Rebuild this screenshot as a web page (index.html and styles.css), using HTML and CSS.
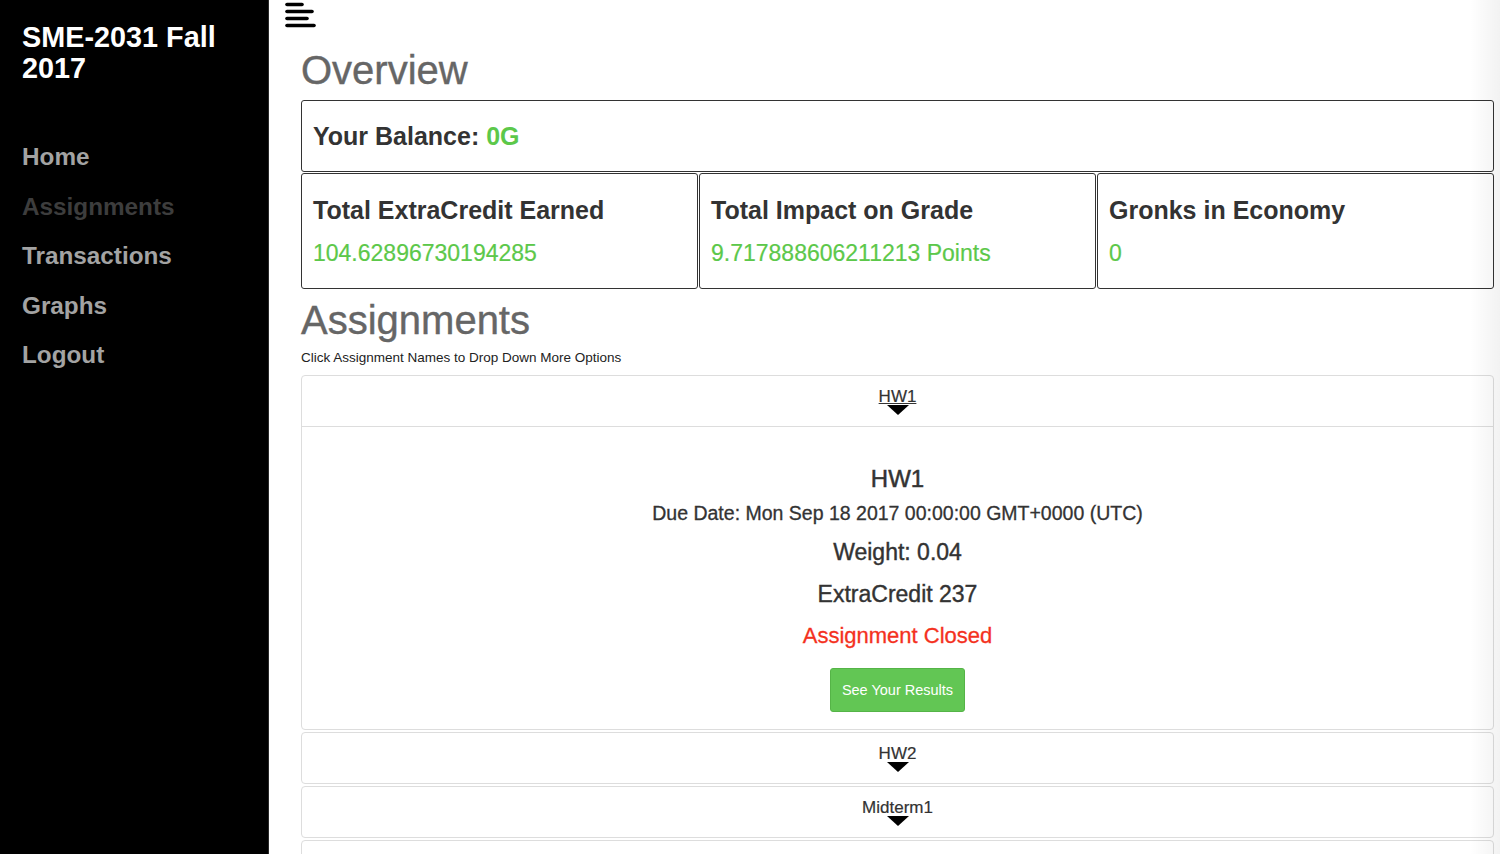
FILE: index.html
```html
<!DOCTYPE html>
<html>
<head>
    <title>SME-2031 Fall 2017 - Overview</title>
    <meta charset="UTF-8">
    <link rel="stylesheet" href="styles.css">
</head>
<body>
    <div class="wrapper">
        <nav class="sidebar">
            <h2 class="brand">SME-2031 Fall 2017</h2>
            <ul class="nav-links">
                <li><a href="#">Home</a></li>
                <li><a href="#" class="active">Assignments</a></li>
                <li><a href="#">Transactions</a></li>
                <li><a href="#">Graphs</a></li>
                <li><a href="#">Logout</a></li>
            </ul>
        </nav>

        <main class="content">
            <button class="menu-toggle" aria-label="Toggle menu">
                <svg width="31" height="27" viewBox="0 0 31 27">
                    <g stroke="#000" stroke-width="3.6" stroke-linecap="round">
                        <line x1="2" y1="2.5" x2="17" y2="2.5"/>
                        <line x1="2" y1="9.5" x2="27" y2="9.5"/>
                        <line x1="2" y1="16.5" x2="22" y2="16.5"/>
                        <line x1="2" y1="23.5" x2="29" y2="23.5"/>
                    </g>
                </svg>
            </button>

            <div class="page">
                <h1>Overview</h1>

                <div class="stat-box balance">
                    Your Balance: <span class="green">0G</span>
                </div>

                <div class="stat-row">
                    <div class="stat-box">
                        <div class="stat-title">Total ExtraCredit Earned</div>
                        <div class="stat-value green">104.62896730194285</div>
                    </div>
                    <div class="stat-box">
                        <div class="stat-title">Total Impact on Grade</div>
                        <div class="stat-value green">9.717888606211213 Points</div>
                    </div>
                    <div class="stat-box">
                        <div class="stat-title">Gronks in Economy</div>
                        <div class="stat-value green">0</div>
                    </div>
                </div>

                <h1>Assignments</h1>
                <p class="hint">Click Assignment Names to Drop Down More Options</p>

                <div class="panel-group">
                    <div class="panel open">
                        <div class="panel-heading">
                            <a href="#" class="panel-title underline">HW1</a>
                            <div class="arrow"></div>
                        </div>
                        <div class="panel-body">
                            <h3>HW1</h3>
                            <div class="due">Due Date: Mon Sep 18 2017 00:00:00 GMT+0000 (UTC)</div>
                            <div class="detail">Weight: 0.04</div>
                            <div class="detail">ExtraCredit 237</div>
                            <div class="detail closed">Assignment Closed</div>
                            <button class="results-btn">See Your Results</button>
                        </div>
                    </div>
                    <div class="panel">
                        <div class="panel-heading">
                            <a href="#" class="panel-title">HW2</a>
                            <div class="arrow"></div>
                        </div>
                    </div>
                    <div class="panel">
                        <div class="panel-heading">
                            <a href="#" class="panel-title">Midterm1</a>
                            <div class="arrow"></div>
                        </div>
                    </div>
                    <div class="panel">
                        <div class="panel-heading">
                            <a href="#" class="panel-title">HW3</a>
                            <div class="arrow"></div>
                        </div>
                    </div>
                </div>
            </div>
            <div class="edge-shade"></div>
        </main>
    </div>
</body>
</html>
```

FILE: styles.css
```css
html, body {
    height: 100%;
}

body {
    font-family: "Liberation Sans", Arial, Helvetica, sans-serif;
    margin: 0;
    background-color: #fff;
    color: #333;
    overflow: hidden;
}

.wrapper {
    display: flex;
    height: 854px;
}

/* sidebar */
.sidebar {
    width: 268px;
    flex-shrink: 0;
    background: #000;
    border-right: 1px solid #2a2a2a;
}

.brand {
    margin: 22px 22px 0 22px;
    font-size: 28.8px;
    line-height: 31px;
    font-weight: bold;
    color: #fff;
}

.nav-links {
    list-style: none;
    margin: 48px 0 0 0;
    padding: 0;
}

.nav-links a {
    display: block;
    padding: 10px 22px;
    line-height: 29.5px;
    font-size: 24.3px;
    font-weight: bold;
    color: #a3a3a3;
    text-decoration: none;
}

.nav-links a.active {
    color: #3d3d3d;
}

/* main area */
.content {
    flex: 1;
    position: relative;
    padding: 2px 6px 0 16px;
}

.menu-toggle {
    display: block;
    background: none;
    border: none;
    padding: 0;
    margin: 0;
    height: 27px;
    cursor: pointer;
}

.menu-toggle svg {
    display: block;
}

.page {
    padding-left: 16px;
}

h1 {
    font-size: 40px;
    line-height: 44px;
    font-weight: normal;
    color: #666;
    margin: 0;
    -webkit-text-stroke: 0.4px #666;
}

.page > h1:first-child {
    margin-top: 19px;
    margin-bottom: 8px;
}

.green {
    color: #5cc84a;
}

.stat-box {
    border: 1px solid #333;
    border-radius: 3px;
    padding: 21px 11px 21px 11px;
}

.balance {
    padding: 20px 11px;
    font-size: 25px;
    line-height: 30px;
    font-weight: bold;
}

.stat-row {
    display: grid;
    grid-template-columns: repeat(3, 1fr);
    gap: 1px;
    margin-top: 1px;
}

.stat-title {
    font-size: 25px;
    line-height: 30px;
    font-weight: bold;
}

.stat-value {
    font-size: 23px;
    line-height: 28px;
    margin-top: 14px;
    -webkit-text-stroke: 0.2px #5cc84a;
}

.stat-row + h1 {
    margin-top: 9px;
}

.hint {
    font-size: 13.5px;
    line-height: 18px;
    margin: 7px 0 8px 0;
    color: #222;
}

/* assignment panels */
.panel {
    border: 1px solid #ddd;
    border-radius: 4px;
    margin-bottom: 2px;
    background: #fff;
}

.panel-heading {
    padding: 11px 15px;
    text-align: center;
}

.panel.open .panel-heading {
    border-bottom: 1px solid #ddd;
}

.panel-title {
    display: block;
    font-size: 17px;
    line-height: 20px;
    color: #333;
    text-decoration: none;
    -webkit-text-stroke: 0.2px #333;
}

.panel-title.underline {
    display: inline-block;
    text-decoration: underline;
}

.arrow {
    width: 0;
    height: 0;
    margin: -2px auto 0 auto;
    border-left: 11px solid transparent;
    border-right: 11px solid transparent;
    border-top: 10px solid #000;
}

.panel-body {
    padding: 37px 15px 17px 15px;
    text-align: center;
}

.panel-body h3 {
    font-size: 24px;
    line-height: 30px;
    font-weight: normal;
    margin: 0;
    -webkit-text-stroke: 0.5px #333;
}

.due {
    font-size: 19.5px;
    line-height: 26px;
    margin: 6px 0 12px 0;
    -webkit-text-stroke: 0.3px #333;
}

.detail {
    font-size: 23px;
    line-height: 28px;
    margin-bottom: 14px;
    -webkit-text-stroke: 0.4px #333;
}

.detail.closed {
    font-size: 22px;
    color: #f4311e;
    margin-bottom: 18px;
    -webkit-text-stroke: 0.3px #f4311e;
}

.results-btn {
    font-family: inherit;
    font-size: 14.5px;
    line-height: 20px;
    padding: 11px 11px;
    color: #fff;
    background-color: #62c654;
    border: 1px solid #55b447;
    border-radius: 3px;
    cursor: pointer;
}

.edge-shade {
    position: absolute;
    top: 0;
    right: 0;
    width: 30px;
    height: 100%;
    background: linear-gradient(to right, rgba(0,0,0,0), rgba(0,0,0,0.05));
    pointer-events: none;
}
```
